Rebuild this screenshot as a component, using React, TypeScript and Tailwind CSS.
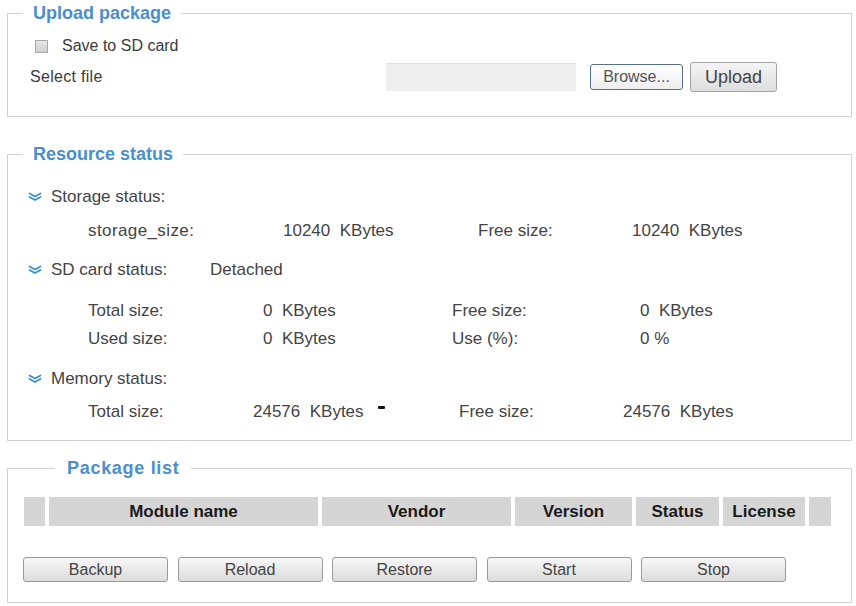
import React from "react";

const Chevron = () => (
  <svg width="14" height="10" viewBox="0 0 14 10" className="shrink-0">
    <polyline points="1.5,1.5 7,4.5 12.5,1.5" fill="none" stroke="#3b8fd0" strokeWidth="1.8" strokeLinejoin="round" strokeLinecap="round" />
    <polyline points="1.5,5 7,8 12.5,5" fill="none" stroke="#3b8fd0" strokeWidth="1.8" strokeLinejoin="round" strokeLinecap="round" />
  </svg>
);

const Legend = ({ children, className = "" }: { children: React.ReactNode; className?: string }) => (
  <legend className={`text-[18px] leading-[20px] font-bold text-[#4a8fcb] ${className}`}>{children}</legend>
);

const Btn = ({ children }: { children: React.ReactNode }) => (
  <button className="w-[145px] h-[25px] rounded-[3px] border border-[#9a9a9a] bg-gradient-to-b from-[#f7f7f7] to-[#dcdcdc] text-[16px] text-[#444] leading-none">
    {children}
  </button>
);

export default function App() {
  return (
    <div className="bg-white w-[856px] h-[606px] text-[#3a3a3a] pt-[3px]" style={{ fontFamily: '"Liberation Sans", Arial, sans-serif' }}>
      {/* Upload package */}
      <fieldset className="ml-[7px] mr-[4px] border border-[#d2d2d2] p-0">
        <Legend className="ml-[15px] px-[10px]">Upload package</Legend>
        <div className="pl-[22px] pt-[12px] pb-[24px]">
          <div className="flex items-center h-[22px]">
            <span className="ml-[5px] w-[13px] h-[13px] border border-[#a9a9a9] bg-gradient-to-b from-[#e6e6e6] to-[#cfcfcf]" />
            <span className="ml-[14px] text-[16px]">Save to SD card</span>
          </div>
          <div className="flex items-center h-[30px] mt-[5px]">
            <span className="w-[356px] text-[16px] tracking-[0.3px]">Select file</span>
            <div className="w-[190px] h-[28px] bg-[#efefef] border-t border-[#e2e2e2]" />
            <button className="ml-[14px] w-[93px] h-[26px] rounded-[3px] border border-[#56708c] bg-gradient-to-b from-white to-[#eeeeee] text-[16px] text-[#555] leading-none">
              Browse...
            </button>
            <button className="ml-[7px] w-[87px] h-[30px] rounded-[3px] border border-[#a3a3a3] bg-gradient-to-b from-[#f4f4f4] to-[#dedede] text-[18px] text-[#444] leading-none">
              Upload
            </button>
          </div>
        </div>
      </fieldset>

      {/* Resource status */}
      <fieldset className="mt-[27px] ml-[7px] mr-[4px] border border-[#d2d2d2] p-0">
        <Legend className="ml-[15px] px-[10px]">Resource status</Legend>
        <div className="pt-[21px] pb-[16px] text-[17px] text-[#444]">
          <div className="flex items-center h-[24px] pl-[20px]">
            <Chevron />
            <span className="ml-[9px]">Storage status:</span>
          </div>
          <div className="flex items-center h-[24px] mt-[10px] pl-[80px]">
            <span className="w-[195px] tracking-[0.4px]">storage_size:</span>
            <span className="w-[195px]">10240&nbsp;&nbsp;KBytes</span>
            <span className="w-[154px]">Free size:</span>
            <span>10240&nbsp;&nbsp;KBytes</span>
          </div>
          <div className="flex items-center h-[24px] mt-[15px] pl-[20px]">
            <Chevron />
            <span className="ml-[9px] w-[159px]">SD card status:</span>
            <span>Detached</span>
          </div>
          <div className="flex items-center h-[24px] mt-[17px] pl-[80px]">
            <span className="w-[175px]">Total size:</span>
            <span className="w-[189px]">0&nbsp;&nbsp;KBytes</span>
            <span className="w-[188px]">Free size:</span>
            <span>0&nbsp;&nbsp;KBytes</span>
          </div>
          <div className="flex items-center h-[24px] mt-[4px] pl-[80px]">
            <span className="w-[175px]">Used size:</span>
            <span className="w-[189px]">0&nbsp;&nbsp;KBytes</span>
            <span className="w-[188px]">Use (%):</span>
            <span>0 %</span>
          </div>
          <div className="flex items-center h-[24px] mt-[16px] pl-[20px]">
            <Chevron />
            <span className="ml-[9px]">Memory status:</span>
          </div>
          <div className="flex items-center h-[24px] mt-[9px] pl-[80px]">
            <span className="w-[165px]">Total size:</span>
            <span className="w-[206px] flex items-center">
              <span>24576&nbsp;&nbsp;KBytes</span>
              <span className="relative -top-[5px] ml-[14px] w-[7px] h-[3px] rounded-[1px] bg-[#111]" />
            </span>
            <span className="w-[164px]">Free size:</span>
            <span>24576&nbsp;&nbsp;KBytes</span>
          </div>
        </div>
      </fieldset>

      {/* Package list */}
      <fieldset className="mt-[17px] ml-[7px] mr-[4px] border border-[#d2d2d2] p-0">
        <Legend className="ml-[47px] px-[12px] tracking-[0.7px]">Package list</Legend>
        <div className="pt-[19px] pb-[20px] pl-[16px]">
          <div className="flex gap-[4px] h-[29px] text-[17px] font-bold text-[#1a1a1a]">
            <div className="w-[21px] bg-[#d5d5d5]" />
            <div className="w-[269px] bg-[#d5d5d5] flex items-center justify-center">Module name</div>
            <div className="w-[189px] bg-[#d5d5d5] flex items-center justify-center">Vendor</div>
            <div className="w-[117px] bg-[#d5d5d5] flex items-center justify-center">Version</div>
            <div className="w-[83px] bg-[#d5d5d5] flex items-center justify-center">Status</div>
            <div className="w-[82px] bg-[#d5d5d5] flex items-center justify-center">License</div>
            <div className="w-[22px] bg-[#d5d5d5]" />
          </div>
          <div className="flex gap-[9.5px] mt-[31px] -ml-[1px]">
            <Btn>Backup</Btn>
            <Btn>Reload</Btn>
            <Btn>Restore</Btn>
            <Btn>Start</Btn>
            <Btn>Stop</Btn>
          </div>
        </div>
      </fieldset>
    </div>
  );
}
